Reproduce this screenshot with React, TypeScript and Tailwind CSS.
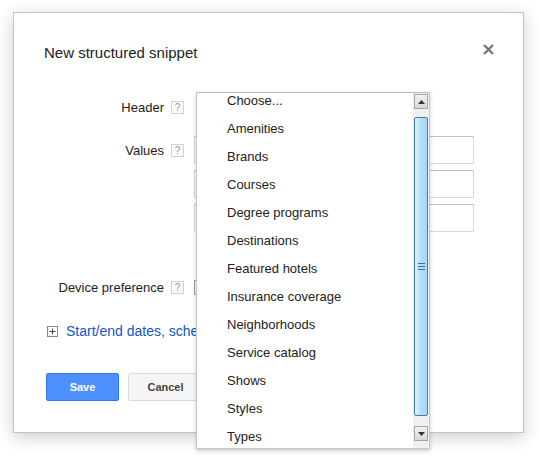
import React from 'react';

const font = "font-['Liberation_Sans',Arial,sans-serif]";

const HEADER_OPTIONS = [
  'Choose...',
  'Amenities',
  'Brands',
  'Courses',
  'Degree programs',
  'Destinations',
  'Featured hotels',
  'Insurance coverage',
  'Neighborhoods',
  'Service catalog',
  'Shows',
  'Styles',
  'Types',
];

function HelpIcon() {
  return (
    <span className="flex h-[13px] w-[13px] shrink-0 items-center justify-center border border-[#d2d2d2] bg-[#fafafa] text-[10px] leading-none text-[#999]">
      ?
    </span>
  );
}

function FieldLabel({ children }: { children: React.ReactNode }) {
  return (
    <div className="flex h-[28px] items-center pt-[1px]">
      <span className="w-[120px] text-right text-[13px] text-[#222]">{children}</span>
      <span className="ml-[7px]">
        <HelpIcon />
      </span>
    </div>
  );
}

function TextInput() {
  return <div className="h-[28px] w-[280px] border border-[#d9d9d9] border-t-[#c0c0c0] bg-white" />;
}

// Native-looking vertical scrollbar of the open select list
function ListScrollbar() {
  return (
    <div className="flex h-full w-[16px] flex-col bg-[#f0f0f0] py-[1px]">
      <div className="mx-[1px] flex h-[15px] items-center justify-center border border-[#a6a6a6] bg-gradient-to-b from-[#f2f2f2] to-[#d8d8d8]">
        <svg width="7" height="4" viewBox="0 0 7 4">
          <path d="M0 4 L3.5 0 L7 4 Z" fill="#333" />
        </svg>
      </div>
      <div className="mx-[1px] mt-[8px] flex h-[299px] items-center justify-center rounded-[2px] border border-[#3c7fb1] bg-gradient-to-r from-[#dff1fc] via-[#b3ddf7] to-[#a6d6f5]">
        <svg width="7" height="7" viewBox="0 0 7 7">
          <path d="M0 0.5 H7 M0 3.5 H7 M0 6.5 H7" stroke="#3c6e96" strokeWidth="1" />
        </svg>
      </div>
      <div className="flex-1" />
      <div className="mx-[1px] mb-[6px] flex h-[15px] items-center justify-center border border-[#a6a6a6] bg-gradient-to-b from-[#f2f2f2] to-[#d8d8d8]">
        <svg width="7" height="4" viewBox="0 0 7 4">
          <path d="M0 0 L3.5 4 L7 0 Z" fill="#333" />
        </svg>
      </div>
    </div>
  );
}

function HeaderSelectList() {
  return (
    <div className="absolute left-[196px] top-[92px] flex h-[357px] w-[234px] border border-[#c8c8c8] border-t-[#bbb] bg-white shadow-[0_2px_4px_rgba(0,0,0,0.2)]">
      <div className="flex-1 overflow-hidden">
        <ul className="-mt-[6px]">
          {HEADER_OPTIONS.map((opt) => (
            <li key={opt} className="flex h-[28px] items-center pl-[30px] text-[13px] text-[#222]">
              {opt}
            </li>
          ))}
        </ul>
      </div>
      <ListScrollbar />
    </div>
  );
}

export default function App() {
  return (
    <div className={`relative h-[463px] w-[540px] overflow-hidden bg-white pl-[13px] pt-[12px] ${font}`}>
      <div className="flex h-[421px] w-[511px] flex-col border border-[#c4c4c4] bg-white pl-[30px] pr-[29px] shadow-[0_4px_16px_rgba(0,0,0,0.2)]">
        {/* Title bar */}
        <div className="mt-[30px] flex items-start justify-between">
          <h1 className="text-[15px] leading-[20px] text-[#222]">New structured snippet</h1>
          <svg className="mt-[1px]" width="11" height="11" viewBox="0 0 11 11">
            <path d="M1 1 L10 10 M10 1 L1 10" stroke="#777" strokeWidth="2.4" />
          </svg>
        </div>

        {/* Header */}
        <div className="mt-[30px] flex">
          <FieldLabel>Header</FieldLabel>
        </div>

        {/* Values */}
        <div className="mt-[15px] flex items-start">
          <FieldLabel>Values</FieldLabel>
          <div className="ml-[10px] flex flex-col gap-[6px]">
            <TextInput />
            <TextInput />
            <TextInput />
          </div>
        </div>

        {/* Device preference */}
        <div className="mt-[41px] flex items-center">
          <FieldLabel>Device preference</FieldLabel>
          <div className="ml-[10px] h-[15px] w-[30px] border border-[#999] bg-white" />
        </div>

        {/* Advanced settings link, partly hidden under the open list */}
        <div className="mt-[18px] ml-[3px] flex items-center gap-[8px]">
          <svg width="11" height="11" viewBox="0 0 11 11">
            <rect x="0.5" y="0.5" width="10" height="10" fill="#fff" stroke="#888" />
            <path d="M2.5 5.5 H8.5 M5.5 2.5 V8.5" stroke="#444" />
          </svg>
          <span className="w-[131px] overflow-hidden whitespace-nowrap">
            <a className="text-[14px] text-[#15c]">Start/end dates, scheduling</a>
          </span>
        </div>

        {/* Actions */}
        <div className="mt-[30px] ml-[2px] flex gap-[9px]">
          <button className="h-[28px] w-[73px] rounded-[2px] border border-[#3079ed] bg-[#4d90fe] text-[11px] font-bold text-white">
            Save
          </button>
          <button className="h-[28px] w-[75px] rounded-[2px] border border-[#dcdcdc] bg-[#f5f5f5] text-[11px] font-bold text-[#444]">
            Cancel
          </button>
        </div>
      </div>

      <HeaderSelectList />
    </div>
  );
}
